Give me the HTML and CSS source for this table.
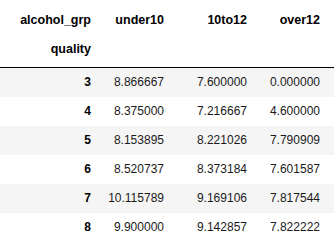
FILE: index.html
```html
<!DOCTYPE html>
<html>
<head>
<meta charset="utf-8">
<link rel="stylesheet" href="styles.css">
</head>
<body>
<table class="df">
  <colgroup>
    <col class="c0"><col class="c1"><col class="c2"><col class="c3">
  </colgroup>
  <thead>
    <tr class="h1">
      <th>alcohol_grp</th><th>under10</th><th>10to12</th><th>over12</th>
    </tr>
    <tr class="h2">
      <th>quality</th><th></th><th></th><th></th>
    </tr>
  </thead>
  <tbody>
    <tr><th>3</th><td>8.866667</td><td>7.600000</td><td>0.000000</td></tr>
    <tr><th>4</th><td>8.375000</td><td>7.216667</td><td>4.600000</td></tr>
    <tr><th>5</th><td>8.153895</td><td>8.221026</td><td>7.790909</td></tr>
    <tr><th>6</th><td>8.520737</td><td>8.373184</td><td>7.601587</td></tr>
    <tr><th>7</th><td>10.115789</td><td>9.169106</td><td>7.817544</td></tr>
    <tr><th>8</th><td>9.900000</td><td>9.142857</td><td>7.822222</td></tr>
  </tbody>
</table>
</body>
</html>
```
FILE: styles.css
```css
html, body {
  margin: 0;
  padding: 0;
  background: #fff;
}
.df {
  border-collapse: collapse;
  border-spacing: 0;
  table-layout: fixed;
  width: 334px;
  font-family: "Liberation Sans", Arial, sans-serif;
  font-size: 12px;
  color: #000;
}
.c0 { width: 97px; }
.c1 { width: 73px; }
.c2 { width: 83px; }
.c3 { width: 81px; }
.df th, .df td {
  text-align: right;
  vertical-align: top;
  line-height: 14px;
  padding: 7px 6px 8px 6px;
  white-space: nowrap;
  font-weight: normal;
}
.df td { color: #1a1a1a; }
.df th { font-weight: bold; color: #000; }
.df thead th { font-size: 12.5px; }
.df th:last-child, .df td:last-child { padding-right: 14px; }
.df thead .h1 th { padding-top: 13px; padding-bottom: 2px; }
.df thead .h2 th { padding-top: 13px; padding-bottom: 11px; }
.df thead { border-bottom: 1px solid #000; }
.df tbody tr:nth-child(odd) { background: #f5f5f5; }
```
